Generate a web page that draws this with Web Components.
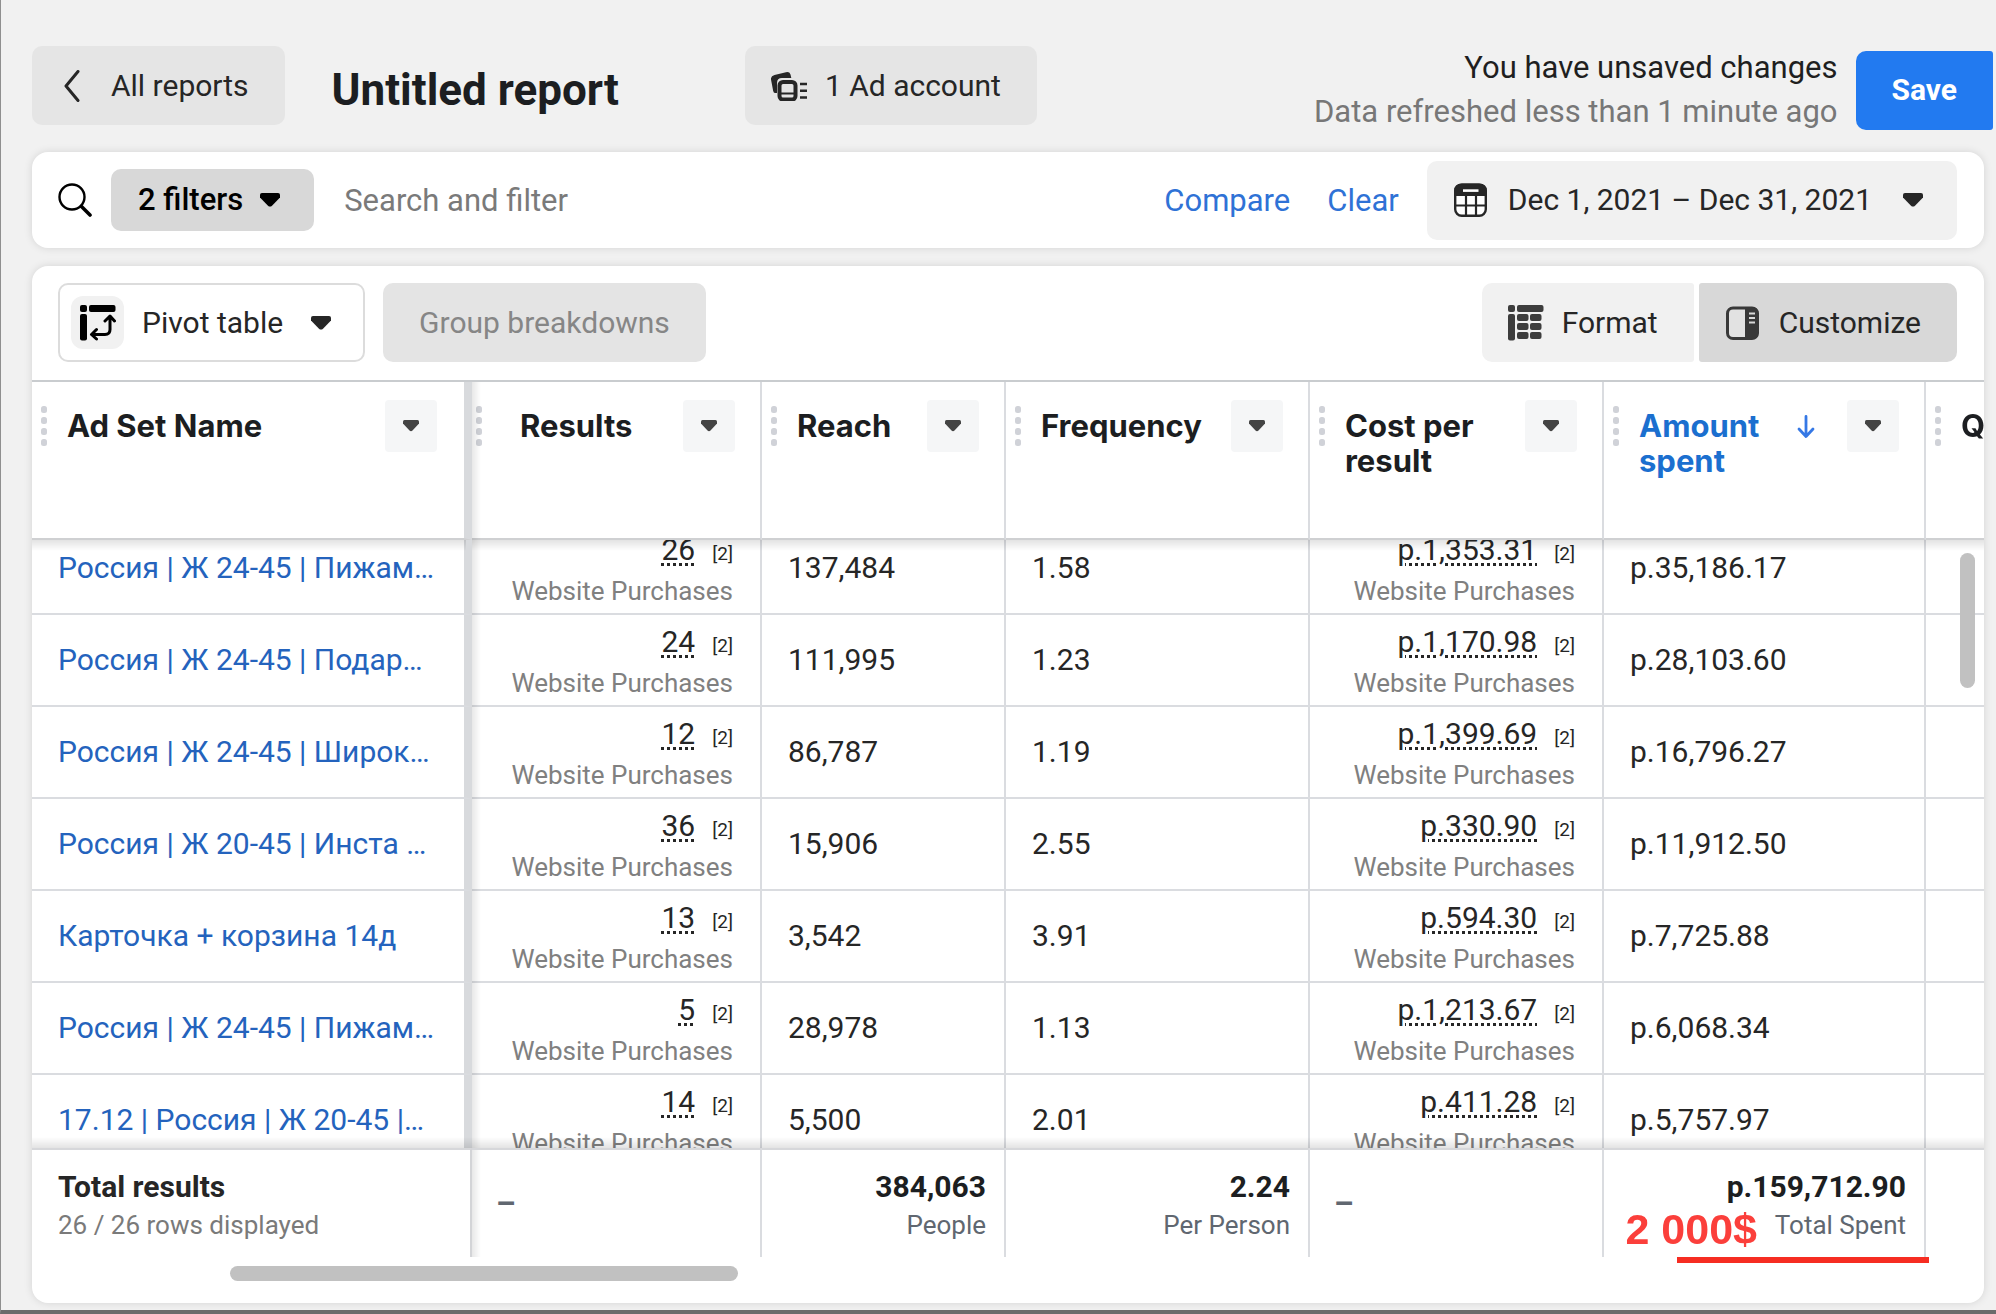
<!DOCTYPE html>
<html lang="en">
<head>
<meta charset="utf-8">
<title>Untitled report</title>
<style>
  body { margin: 0; font-family: Roboto, "Liberation Sans", sans-serif; font-size: 30px; color: #262626; background: #f1f1f1; }
</style>
</head>
<body>
<report-app></report-app>
<script>
const ICONS = {
  back: [20, 32, '<path d="M15 1.500 3 16 15 30.500" fill="none" stroke="currentColor" stroke-width="3" stroke-linecap="round" stroke-linejoin="round"/>'],
  accounts: [36, 30, '<path d="M0 8.500Q-.4 5 3.500 4L15 1.200Q18.500.4 19.500 3.500L20.300 7H11Q6 7 6 12V22H4Q2.600 22 2.200 20Z" fill="currentColor"/><rect x="8.500" y="11" width="16" height="17.500" rx="3.500" fill="none" stroke="currentColor" stroke-width="4"/><path d="M10 22.500h13" stroke="currentColor" stroke-width="2"/><path d="M29 13h7M29 19.700h7M29 26.500h7" stroke="currentColor" stroke-width="2.600"/>'],
  search: [34, 34, '<circle cx="14" cy="14" r="12.500" fill="none" stroke="#000" stroke-width="2.400"/><path d="M23.500 23.500 32 32" stroke="#000" stroke-width="3.600" stroke-linecap="round"/>'],
  calendar: [33, 34, '<rect x="1.200" y="1.700" width="30.600" height="31" rx="6.500" fill="#fff" stroke="currentColor" stroke-width="2.400"/><path d="M0 13V8Q0 .5 8 .5H25Q33 .5 33 8V13Z" fill="currentColor"/><path d="M1 22.500H32M12 12V33M22 12V33" stroke="currentColor" stroke-width="2.200"/><rect x="9" y="6.300" width="15.500" height="2.600" fill="#fff"/>'],
  pivot: [36, 36, '<rect width="7" height="7" rx="2"/><rect x="9" width="26.500" height="7" rx="2"/><rect y="9" width="7" height="26.500" rx="2"/><path d="M12.500 29.500H25Q30 29.500 30 24.500V12.500M16.500 24.500 11.500 29.500 16.500 34M25 16 30 11 34.500 16" fill="none" stroke="#000" stroke-width="3" stroke-linecap="round" stroke-linejoin="round"/>'],
  format: [36, 36, '<g fill="#3d3d3d"><rect width="7" height="7" rx="2"/><rect x="9" width="26.500" height="7" rx="2"/><rect y="9" width="7" height="26.500" rx="2"/><rect x="9" y="9" width="11.500" height="7" rx="2"/><rect x="22" y="9" width="11.500" height="7" rx="2"/><rect x="9" y="18" width="11.500" height="7" rx="2"/><rect x="22" y="18" width="11.500" height="7" rx="2"/><rect x="9" y="27" width="11.500" height="7" rx="2"/><rect x="22" y="27" width="11.500" height="7" rx="2"/></g>'],
  panel: [33, 34, '<rect x="1.500" y="2" width="30" height="30.500" rx="5.500" fill="#e2e2e2" stroke="#383838" stroke-width="3"/><path d="M19 1H26Q32.500 1 32.500 8V26Q32.500 33 26 33H19Z" fill="#383838"/><path d="M23 7.500h6M23 12h6M23 16.500h6" stroke="#d8d8d8" stroke-width="2"/>'],
  caret: [20, 14, '<path d="M2 0H18Q20 0 20 2V4.500L12 12.700Q10 14.500 8 12.700L0 4.500V2Q0 0 2 0Z" fill="currentColor"/>'],
  'caret-small': [16, 12, '<path d="M1.500 0H14.500Q16 0 16 1.500V3.500L9.500 10.500Q8 12 6.500 10.500L0 3.500V1.500Q0 0 1.500 0Z" fill="currentColor"/>'],
  down: [18, 24, '<path d="M9 1.500V21M2 14 9 21.500 16 14" fill="none" stroke="#3578e5" stroke-width="2.800" stroke-linecap="round" stroke-linejoin="round"/>'],
  grip: [6, 42, '<g fill="#d0d2d8"><rect y="0" width="6" height="7" rx="2.500"/><rect y="11" width="6" height="7" rx="2.500"/><rect y="22" width="6" height="7" rx="2.500"/><rect y="33" width="6" height="7" rx="2.500"/></g>']
};

class UiIcon extends HTMLElement {
  connectedCallback() {
    const [w, h, body] = ICONS[this.getAttribute('name')];
    this.attachShadow({ mode: 'open' }).innerHTML =
      `<style>:host{display:inline-flex;flex:none}svg{display:block}</style>
       <svg width="${w}" height="${h}" viewBox="0 0 ${w} ${h}" aria-hidden="true">${body}</svg>`;
  }
}

class UiButton extends HTMLElement {
  connectedCallback() {
    const disabled = this.hasAttribute('disabled') ? 'disabled' : '';
    const popup = this.hasAttribute('menu') ? 'aria-haspopup="true"' : '';
    this.attachShadow({ mode: 'open' }).innerHTML = `
      <style>
        :host { display: inline-flex; flex: none; }
        button { display: flex; align-items: center; gap: var(--gap, 20px); box-sizing: border-box;
          height: var(--height, 79px); padding: 0 var(--end, 36px) 0 var(--start, 27px); margin: 0;
          border: var(--border, 0); border-radius: var(--radius, 10px); background: var(--bg, #e5e5e5);
          color: inherit; font: inherit; line-height: 40px; white-space: nowrap; }
        .caret { margin-left: var(--caret-gap, 10px); }
      </style>
      <button type="button" ${disabled} ${popup}><slot name="icon"></slot><span><slot></slot></span>${
        popup ? '<ui-icon class="caret" name="caret"></ui-icon>' : ''}</button>`;
  }
}

class ReportHeader extends HTMLElement {
  connectedCallback() {
    this.attachShadow({ mode: 'open' }).innerHTML = `
      <style>
        :host { display: flex; justify-content: space-between; align-items: flex-start; padding: 46px 3px 18px 31px; }
        .left, .right { display: flex; align-items: center; }
        .back { --start: 31px; --gap: 28px; }
        h1 { margin: 0; padding: 8px 126px 0 47px; font-size: 44px; line-height: 52px; font-weight: 700; color: #1c1e21; white-space: nowrap; }
        .account { --start: 26px; --gap: 18px; }
        .right { gap: 19px; }
        p { margin: 0; font-size: 31px; line-height: 44px; text-align: right; white-space: nowrap; color: #1f1f1f; }
        .muted { color: #777; }
        .save { --bg: #227af0; --start: 35px; --radius: 10px 3px 3px 10px; color: #fff; font-weight: 700; }
      </style>
      <div class="left">
        <ui-button class="back"><ui-icon slot="icon" name="back"></ui-icon>All reports</ui-button>
        <h1>Untitled report</h1>
        <ui-button class="account"><ui-icon slot="icon" name="accounts"></ui-icon>1 Ad account</ui-button>
      </div>
      <div class="right">
        <div><p>You have unsaved changes</p><p class="muted">Data refreshed less than 1 minute ago</p></div>
        <ui-button class="save">Save</ui-button>
      </div>`;
  }
}

class FilterBar extends HTMLElement {
  connectedCallback() {
    this.attachShadow({ mode: 'open' }).innerHTML = `
      <style>
        :host { display: flex; align-items: center; height: 96px; padding: 0 27px 0 26px; background: #fff; border-radius: 16px;
          box-shadow: 0 0 8px rgba(0,0,0,.12); font-size: 31px; }
        label { display: flex; margin-right: 19px; }
        .filters { --height: 62px; --bg: #d8d8d8; --gap: 17px; --caret-gap: 0; --end: 34px; color: #000; font-weight: 500; }
        input { flex: 1; min-width: 0; margin: 0 31px 0 30px; padding: 0; border: 0; outline: 0; background: none; font: inherit; color: inherit; }
        input::placeholder { color: #7a7a7a; opacity: 1; }
        a { margin-right: 37px; color: #2f72d6; text-decoration: none; }
        a.clear { margin-right: 28px; }
        .dates { --bg: #f1f1f1; --end: 34px; --gap: 21px; font-size: 30px; }
      </style>
      <label for="q" aria-label="Search"><ui-icon name="search"></ui-icon></label>
      <ui-button class="filters" menu>2 filters</ui-button>
      <input id="q" type="text" placeholder="Search and filter">
      <a href="#compare">Compare</a><a class="clear" href="#clear">Clear</a>
      <ui-button class="dates" menu><ui-icon slot="icon" name="calendar"></ui-icon>Dec 1, 2021 – Dec 31, 2021</ui-button>`;
  }
}

class ReportToolbar extends HTMLElement {
  connectedCallback() {
    this.attachShadow({ mode: 'open' }).innerHTML = `
      <style>
        :host { display: flex; justify-content: space-between; padding: 17px 27px 18px 26px; border-bottom: 2px solid #c9cccf; }
        div { display: flex; gap: 18px; }
        .view { gap: 5px; }
        .pivot { --bg: #fff; --border: 2px solid #dcdcdc; --start: 11px; --end: 32px; --gap: 18px; }
        .tile { display: flex; align-items: center; justify-content: center; width: 53px; height: 53px; border-radius: 12px; background: #f1f1f1; }
        .group { --bg: #e4e4e4; --start: 36px; color: #868686; }
        .format { --bg: #f1f1f1; --start: 26px; --gap: 18px; --radius: 10px 3px 3px 10px; }
        .customize { --bg: #d8d8d8; --radius: 3px 10px 10px 3px; }
      </style>
      <div>
        <ui-button class="pivot" menu><span class="tile" slot="icon"><ui-icon name="pivot"></ui-icon></span>Pivot table</ui-button>
        <ui-button class="group" disabled>Group breakdowns</ui-button>
      </div>
      <div class="view">
        <ui-button class="format"><ui-icon slot="icon" name="format"></ui-icon>Format</ui-button>
        <ui-button class="customize"><ui-icon slot="icon" name="panel"></ui-icon>Customize</ui-button>
      </div>`;
  }
}

class ColumnHead extends HTMLElement {
  connectedCallback() {
    const sorted = this.hasAttribute('sorted');
    this.attachShadow({ mode: 'open' }).innerHTML = `
      <style>
        :host { display: flex; align-items: flex-start; padding: 18px var(--trail, 25px) 0 var(--lead, 9px); }
        .grip { margin-top: 6px; }
        .name { flex: 1; padding: 8px 0 0 var(--indent, 20px); }
        .sort { margin: 15px 32px 0 0; }
        button { display: flex; flex: none; align-items: center; justify-content: center; width: 52px; height: 52px;
          margin: 0; padding: 0; border: 0; border-radius: 4px; background: #f5f6f7; color: #444; }
      </style>
      <ui-icon class="grip" name="grip"></ui-icon>
      <span class="name"><slot></slot></span>
      ${sorted ? '<ui-icon class="sort" name="down"></ui-icon>' : ''}
      ${this.hasAttribute('bare') ? '' : '<button type="button" aria-label="Column menu"><ui-icon name="caret-small"></ui-icon></button>'}`;
  }
}

class MetricCell extends HTMLElement {
  connectedCallback() {
    this.attachShadow({ mode: 'open' }).innerHTML = `
      <style>
        :host { display: block; text-align: right; white-space: nowrap; line-height: 42px; }
        .value { text-decoration: underline dotted 3px; text-underline-offset: 3px; }
        .note { margin-left: 17px; font-size: 19px; }
        .sub { font-size: 26px; line-height: 32px; color: #808080; }
      </style>
      <div><span class="value"><slot></slot></span><span class="note">[2]</span></div>
      <div class="sub">Website Purchases</div>`;
  }
}

class ReportTable extends HTMLElement {
  connectedCallback() {
    const rows = [
      ['Россия | Ж 24-45 | Пижам…', '26', '137,484', '1.58', 'p.1,353.31', 'p.35,186.17'],
      ['Россия | Ж 24-45 | Подар…', '24', '111,995', '1.23', 'p.1,170.98', 'p.28,103.60'],
      ['Россия | Ж 24-45 | Широк…', '12', '86,787', '1.19', 'p.1,399.69', 'p.16,796.27'],
      ['Россия | Ж 20-45 | Инста …', '36', '15,906', '2.55', 'p.330.90', 'p.11,912.50'],
      ['Карточка + корзина 14д', '13', '3,542', '3.91', 'p.594.30', 'p.7,725.88'],
      ['Россия | Ж 24-45 | Пижам…', '5', '28,978', '1.13', 'p.1,213.67', 'p.6,068.34'],
      ['17.12 | Россия | Ж 20-45 |…', '14', '5,500', '2.01', 'p.411.28', 'p.5,757.97']
    ];
    const body = rows.map(([name, results, reach, freq, cost, spent]) => `
      <tr><td class="pin"><a href="#adset">${name}</a></td>
      <td class="metric"><metric-cell>${results}</metric-cell></td>
      <td>${reach}</td><td>${freq}</td>
      <td class="metric"><metric-cell>${cost}</metric-cell></td>
      <td>${spent}</td><td></td></tr>`).join('');
    this.attachShadow({ mode: 'open' }).innerHTML = `
      <style>
        :host { display: flex; flex-direction: column; flex: 1; min-height: 0; position: relative; }
        .scroll { height: 100%; overflow: auto; scrollbar-width: none; }
        table { width: 100%; table-layout: fixed; border-collapse: separate; border-spacing: 0; line-height: 40px; }
        th, td { box-sizing: border-box; padding: 0 0 0 26px; text-align: left; background: #fff; border-right: 2px solid #dadce0; white-space: nowrap; }
        th:last-child, td:last-child { border-right: 0; }
        thead th { position: sticky; top: 0; z-index: 2; height: 158px; padding: 0; vertical-align: top; white-space: normal;
          border-bottom: 2px solid #cfd0d2; font: 700 31px/35px Inter, "Liberation Sans", sans-serif; color: #1c1e21; }
        thead th::after { content: ""; position: absolute; left: 0; right: -2px; top: calc(100% + 2px); height: 11px;
          background: linear-gradient(rgba(0,0,0,.11), transparent); }
        tbody td { height: 92px; border-bottom: 2px solid #dadce0; vertical-align: middle; }
        td.metric { padding: 0 27px 0 0; }
        .pin { position: sticky; left: 0; z-index: 1; border-right: 8px solid #d8dadd; }
        thead .pin { z-index: 3; --trail: 27px; }
        .pin::before { content: ""; position: absolute; left: calc(100% + 8px); top: 0; bottom: -2px; width: 9px;
          background: linear-gradient(90deg, rgba(0,0,0,.09), transparent); }
        a { color: #2463bd; text-decoration: none; }
        thead .sorted { color: #1b6fcf; }
        thead .offset { --lead: 4px; --indent: 38px; }
        tfoot td { position: sticky; bottom: 0; z-index: 2; height: 109px; padding: 17px 18px 0 0; border-top: 2px solid #d6d7da;
          text-align: right; vertical-align: top; color: #1c1e21; }
        tfoot td.pin { padding-left: 26px; }
        tfoot td::after { content: ""; position: absolute; left: 0; right: -2px; bottom: calc(100% + 2px); height: 11px;
          background: linear-gradient(transparent, rgba(0,0,0,.11)); }
        tfoot .pin { z-index: 3; text-align: left; border-right: 2px solid #d3d4d7; color: #262626; }
        tfoot .pin::before { left: calc(100% + 2px); bottom: 0; }
        tfoot td.none { padding: 0 0 0 24px; text-align: left; vertical-align: middle; font-weight: 700; color: #606770; font-size: 31px; }
        strong { display: block; font-weight: 700; }
        small { display: block; font-size: 26px; line-height: 36px; color: #606770; }
        .pin small { color: #7a7a7a; }
        .thumb { position: absolute; top: 171px; right: 9px; z-index: 4; width: 15px; height: 135px; border-radius: 8px; background: #c1c1c1; }
        .mark { position: absolute; z-index: 4; right: 227px; bottom: 4px; font: 700 43px/48px "Liberation Sans", sans-serif; color: #fb3f3b; }
        .rule { position: absolute; z-index: 4; right: 55px; bottom: -6px; width: 252px; height: 6px; background: #f62d22; }
      </style>
      <div class="scroll">
        <table>
          <colgroup><col style="width:440px"><col style="width:290px"><col style="width:244px"><col style="width:304px"><col style="width:294px"><col style="width:322px"><col></colgroup>
          <thead><tr>
            <th class="pin"><column-head>Ad Set Name</column-head></th>
            <th class="offset"><column-head>Results</column-head></th>
            <th><column-head>Reach</column-head></th>
            <th><column-head>Frequency</column-head></th>
            <th><column-head>Cost per result</column-head></th>
            <th class="sorted" aria-sort="descending"><column-head sorted>Amount spent</column-head></th>
            <th><column-head bare>Q</column-head></th>
          </tr></thead>
          <tbody>${body}</tbody>
          <tfoot><tr>
            <td class="pin"><strong>Total results</strong><small>26 / 26 rows displayed</small></td>
            <td class="none">–</td>
            <td><strong>384,063</strong><small>People</small></td>
            <td><strong>2.24</strong><small>Per Person</small></td>
            <td class="none">–</td>
            <td><strong>p.159,712.90</strong><small>Total Spent</small></td>
            <td></td>
          </tr></tfoot>
        </table>
      </div>
      <div class="thumb"></div>
      <div class="mark">2 000$</div>
      <div class="rule"></div>`;
    // The list opens part-way into its first row.
    this.shadowRoot.querySelector('.scroll').scrollTop = 17;
  }
}

class ReportApp extends HTMLElement {
  connectedCallback() {
    this.attachShadow({ mode: 'open' }).innerHTML = `
      <style>
        :host { display: flex; flex-direction: column; box-sizing: border-box; height: 100vh;
          border-left: 1px solid #8f8f8f; border-bottom: 4px solid #6b6b6b; background: #f1f1f1; }
        main { display: flex; flex: 1; flex-direction: column; gap: 18px; min-height: 0; padding: 0 12px 7px 31px; }
        section { display: flex; flex: 1; flex-direction: column; min-height: 0; overflow: hidden; background: #fff;
          border-radius: 16px; box-shadow: 0 0 8px rgba(0,0,0,.12); }
        .track { height: 15px; padding: 9px 0 22px; }
        .track div { width: 26%; height: 15px; margin-left: 198px; border-radius: 8px; background: #c1c1c1; }
      </style>
      <report-header></report-header>
      <main>
        <filter-bar></filter-bar>
        <section>
          <report-toolbar></report-toolbar>
          <report-table></report-table>
          <div class="track"><div></div></div>
        </section>
      </main>`;
  }
}

customElements.define('ui-icon', UiIcon);
customElements.define('ui-button', UiButton);
customElements.define('report-header', ReportHeader);
customElements.define('filter-bar', FilterBar);
customElements.define('report-toolbar', ReportToolbar);
customElements.define('column-head', ColumnHead);
customElements.define('metric-cell', MetricCell);
customElements.define('report-table', ReportTable);
customElements.define('report-app', ReportApp);
</script>
</body>
</html>
